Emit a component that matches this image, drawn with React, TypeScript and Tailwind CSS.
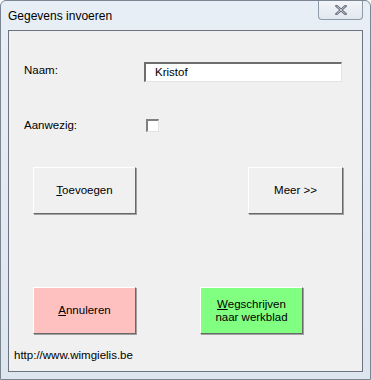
import type { ReactNode } from 'react'

function WinButton({ children, bg, width }: { children: ReactNode; bg: string; width: string }) {
  return (
    <button
      type="button"
      className={`flex h-[47px] ${width} flex-col items-center justify-center border border-t-white border-l-white border-b-[#696969] border-r-[#696969] ${bg} text-[11.5px] leading-[13px] text-black shadow-[1px_1px_0_#a0a0a0]`}
    >
      {children}
    </button>
  )
}

export default function App() {
  return (
    <div
      className="flex h-[380px] w-[371px] flex-col rounded-t-[6px] border border-[#7b8591] bg-gradient-to-b from-[#e8eef5] to-[#dde5ee] text-black"
      style={{ fontFamily: '"Liberation Sans", Arial, sans-serif' }}
    >
      {/* title bar */}
      <div className="flex h-[29px] items-start justify-between">
        <span className="pl-[7px] pt-[7px] text-[12px] leading-[16px] text-black">Gegevens invoeren</span>
        <div className="mr-[7px] flex h-[19px] w-[45px] items-center justify-center rounded-b-[4px] border border-t-0 border-[#8f9aa8] bg-gradient-to-b from-[#f1f4f8] to-[#e2e8ef]">
          <svg width="12" height="10" viewBox="0 0 12 10">
            <path d="M1.5 1 L10.5 9 M10.5 1 L1.5 9" stroke="#5b6370" strokeWidth="2.4" strokeLinecap="square" />
            <path d="M1.5 1 L10.5 9 M10.5 1 L1.5 9" stroke="#eef1f5" strokeWidth="0.8" />
          </svg>
        </div>
      </div>

      {/* client area */}
      <div className="mx-[7px] flex h-[342px] flex-col border border-[#6b7480] bg-[#f0f0f0]">
        <div className="mt-[31px] flex h-[20px] items-center">
          <span className="-mt-[3px] w-[135px] pl-[15px] text-[11.5px]">Naam:</span>
          <div className="flex h-[20px] w-[198px] items-center border-t-2 border-l-2 border-t-[#6e6e6e] border-l-[#6e6e6e] border-b border-r border-b-[#e3e3e3] border-r-[#e3e3e3] bg-white pl-[9px] text-[11.5px]">
            Kristof
          </div>
        </div>

        <div className="mt-[37px] flex h-[13px] items-center">
          <span className="w-[137px] pl-[15px] text-[11.5px]">Aanwezig:</span>
          <div className="h-[13px] w-[13px] border-t-2 border-l-2 border-t-[#808080] border-l-[#808080] border-b border-r border-b-[#e3e3e3] border-r-[#e3e3e3] bg-white" />
        </div>

        <div className="mt-[35px] flex pl-[24px]">
          <WinButton bg="bg-[#f0f0f0]" width="w-[103px]">
            <span>
              <span className="underline">T</span>oevoegen
            </span>
          </WinButton>
          <div className="w-[112px]" />
          <WinButton bg="bg-[#f0f0f0]" width="w-[95px]">
            <span>Meer &gt;&gt;</span>
          </WinButton>
        </div>

        <div className="mt-[73px] flex pl-[24px]">
          <WinButton bg="bg-[#ffc0c0]" width="w-[103px]">
            <span>
              <span className="underline">A</span>nnuleren
            </span>
          </WinButton>
          <div className="w-[64px]" />
          <WinButton bg="bg-[#80ff80]" width="w-[103px]">
            <span>
              <span className="underline">W</span>egschrijven
            </span>
            <span>naar werkblad</span>
          </WinButton>
        </div>

        <div className="mt-[15px] pl-[5px] text-[11.5px] leading-[13px]">http://www.wimgielis.be</div>
      </div>
    </div>
  )
}
